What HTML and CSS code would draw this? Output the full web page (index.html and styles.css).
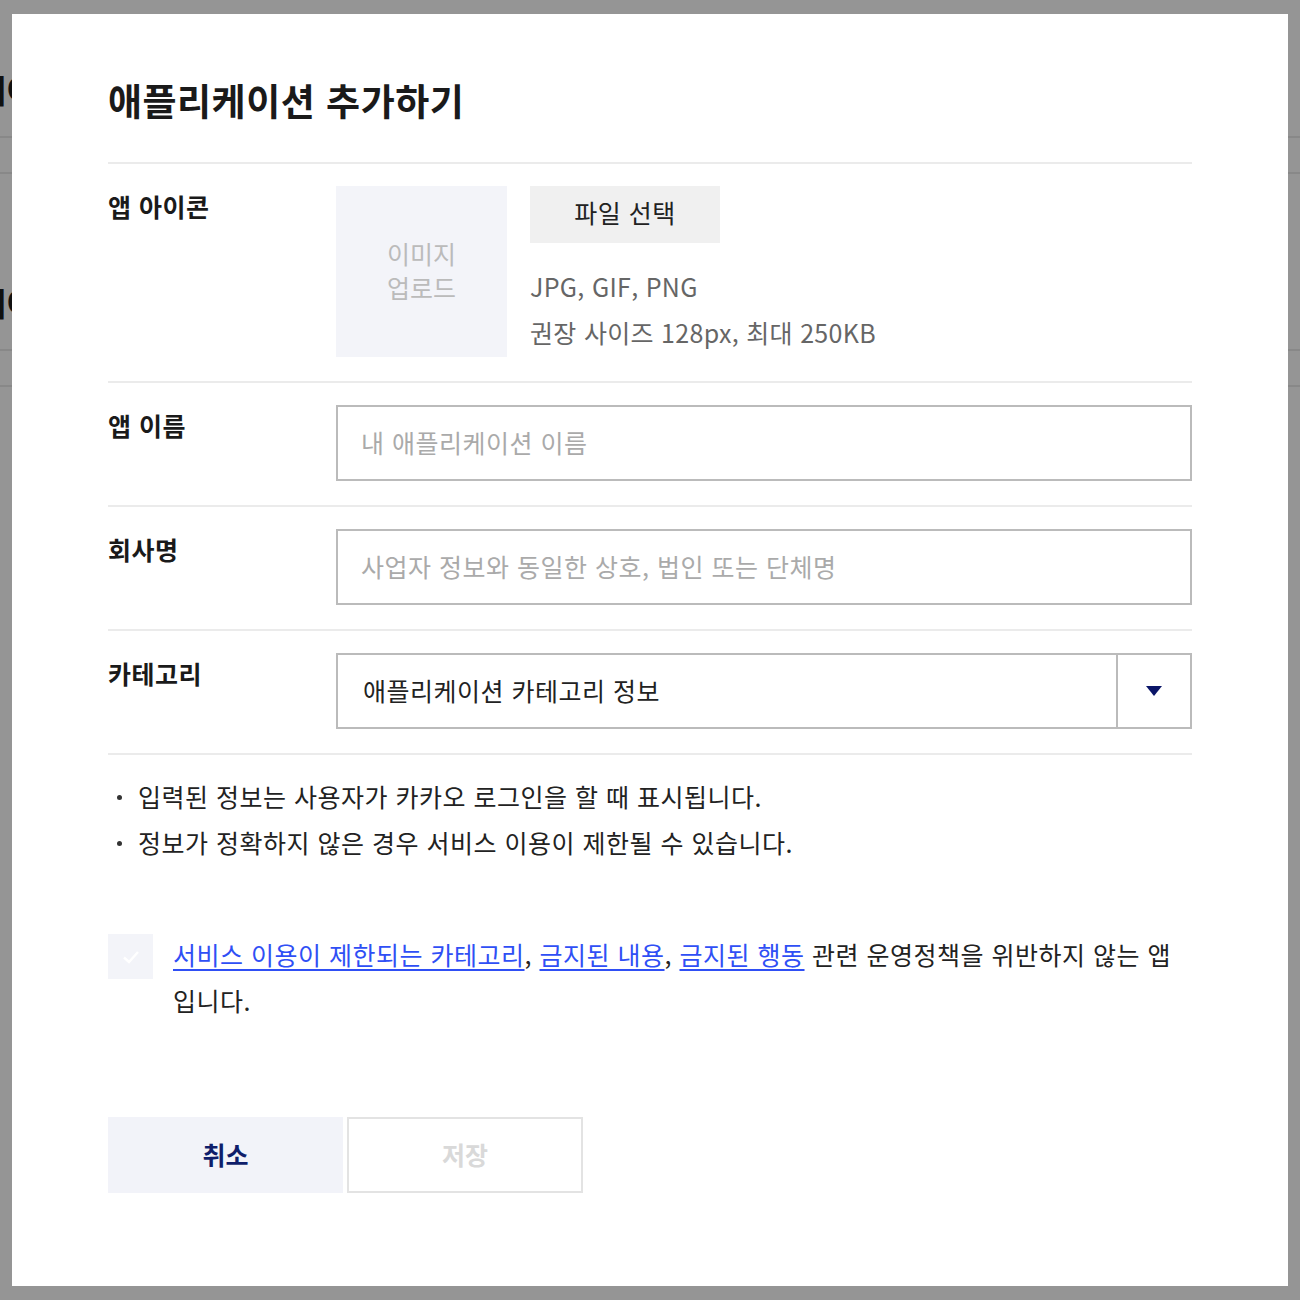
FILE: index.html
```html
<!DOCTYPE html>
<html lang="ko">
<head>
  <meta charset="UTF-8">
  <meta name="viewport" content="width=device-width, initial-scale=1.0">
  <title>애플리케이션 추가하기</title>
  <link rel="stylesheet" href="styles.css">
</head>
<body>
  <div class="page">
    <div class="page-item">
      <div class="page-title">내 애플리케이</div>
      <div class="page-sub">info</div>
    </div>
    <div class="page-item">
      <div class="page-title">내 애플리케이</div>
      <div class="page-sub">info</div>
    </div>
  </div>

  <div class="modal">
    <h1 class="modal-title">애플리케이션 추가하기</h1>

    <div class="form-row">
      <div class="form-label">앱 아이콘</div>
      <div class="form-field icon-field">
        <div class="icon-box">이미지<br>업로드</div>
        <div class="icon-info">
          <button class="file-btn">파일 선택</button>
          <p class="icon-desc">JPG, GIF, PNG<br>권장 사이즈 128px, 최대 250KB</p>
        </div>
      </div>
    </div>

    <div class="form-row">
      <label class="form-label" for="appName">앱 이름</label>
      <div class="form-field">
        <input class="text-input" id="appName" type="text" placeholder="내 애플리케이션 이름">
      </div>
    </div>

    <div class="form-row">
      <label class="form-label" for="company">회사명</label>
      <div class="form-field">
        <input class="text-input" id="company" type="text" placeholder="사업자 정보와 동일한 상호, 법인 또는 단체명">
      </div>
    </div>

    <div class="form-row">
      <div class="form-label">카테고리</div>
      <div class="form-field">
        <div class="select-box">
          <span class="select-value">애플리케이션 카테고리 정보</span>
          <span class="select-arrow"><span class="triangle"></span></span>
        </div>
      </div>
    </div>

    <ul class="notes">
      <li>입력된 정보는 사용자가 카카오 로그인을 할 때 표시됩니다.</li>
      <li>정보가 정확하지 않은 경우 서비스 이용이 제한될 수 있습니다.</li>
    </ul>

    <div class="agree">
      <span class="check">
        <svg width="22" height="22" viewBox="0 0 22 22"><path d="M4 11.5 L9 16 L18 6" fill="none" stroke="#fff" stroke-width="2.4"/></svg>
      </span>
      <p class="agree-text"><a href="#">서비스 이용이 제한되는 카테고리</a>, <a href="#">금지된 내용</a>, <a href="#">금지된 행동</a> 관련 운영정책을 위반하지 않는 앱입니다.</p>
    </div>

    <div class="actions">
      <button class="btn btn-cancel">취소</button>
      <button class="btn btn-save" disabled>저장</button>
    </div>
  </div>
</body>
</html>
```

FILE: styles.css
```css
* { box-sizing: border-box; }
body { margin: 0; background: #959595; font-family: "Noto Sans CJK KR", "Noto Sans", sans-serif; color: #222; min-height: 1300px; position: relative; overflow: hidden; }

.page { padding-top: 66px; margin-left: -150px; }
.page-item { height: 213px; }
.page-title { font-size: 32px; font-weight: 700; color: #111; line-height: 46px; }
.page-sub { margin-top: 24px; border-top: 2px solid #888; border-bottom: 2px solid #888; height: 38px; font-size: 20px; line-height: 34px; color: #333; padding-left: 100px; }

.modal { position: absolute; top: 14px; left: 12px; width: 1276px; height: 1272px; background: #fff; padding: 60px 96px 0; }
.modal-title { margin: 0; font-size: 37px; font-weight: 700; line-height: 52px; color: #1a1a1a; padding-bottom: 36px; border-bottom: 2px solid #ebebeb; letter-spacing: 0.5px; }

.form-row { display: flex; padding: 22px 0 24px; border-bottom: 2px solid #ebebeb; }
.form-label { width: 228px; flex-shrink: 0; font-size: 25px; font-weight: 700; line-height: 40px; color: #1a1a1a; letter-spacing: 0.5px; }
.form-field { flex: 1; }

.icon-field { display: flex; gap: 23px; }
.icon-box { width: 171px; height: 171px; background: #f3f4f9; color: #bbb; font-size: 25px; line-height: 34px; display: flex; align-items: center; justify-content: center; text-align: center; padding-bottom: 4px; }
.file-btn { width: 190px; height: 57px; background: #f0f0f0; border: none; font-family: inherit; font-size: 25px; color: #222; padding: 0 0 6px; letter-spacing: 0.5px; }
.icon-desc { margin: 20px 0 0; font-size: 25px; line-height: 46px; color: #666; letter-spacing: 0.3px; }

.text-input { width: 100%; height: 76px; border: 2px solid #bbb; padding: 0 23px 2px; font-family: inherit; font-size: 25px; letter-spacing: 0.5px; color: #222; outline: none; }
.text-input::placeholder { color: #aaa; }

.select-box { display: flex; height: 76px; border: 2px solid #bbb; }
.select-value { flex: 1; padding-left: 25px; font-size: 25px; letter-spacing: 0.5px; line-height: 70px; color: #222; }
.select-arrow { width: 74px; border-left: 2px solid #bbb; display: flex; align-items: center; justify-content: center; }
.triangle { width: 0; height: 0; border-left: 8px solid transparent; border-right: 8px solid transparent; border-top: 10px solid #0a1568; }

.notes { list-style: none; margin: 18px 0 0; padding: 0; }
.notes li { position: relative; padding-left: 30px; font-size: 25px; letter-spacing: 0.5px; line-height: 46px; color: #222; }
.notes li::before { content: ""; position: absolute; left: 9px; top: 22px; width: 5px; height: 5px; border-radius: 50%; background: #333; }

.agree { display: flex; gap: 20px; margin-top: 66px; }
.check { width: 45px; height: 45px; flex-shrink: 0; margin-top: 3px; background: #f3f4f9; display: flex; align-items: center; justify-content: center; }
.agree-text { margin: 0; font-size: 25px; letter-spacing: 0.5px; line-height: 46px; color: #222; }
.agree-text a { color: #2f4ff5; text-decoration: underline; text-underline-offset: 4px; }

.actions { display: flex; gap: 4px; margin-top: 94px; }
.btn { width: 235px; height: 76px; font-family: inherit; font-size: 25px; font-weight: 700; padding: 0 0 2px; }
.btn-cancel { background: #f2f3f9; border: none; color: #0f1e6b; }
.btn-save { background: #fff; border: 2px solid #e3e3e3; color: #d9d9d9; width: 236px; }
```
